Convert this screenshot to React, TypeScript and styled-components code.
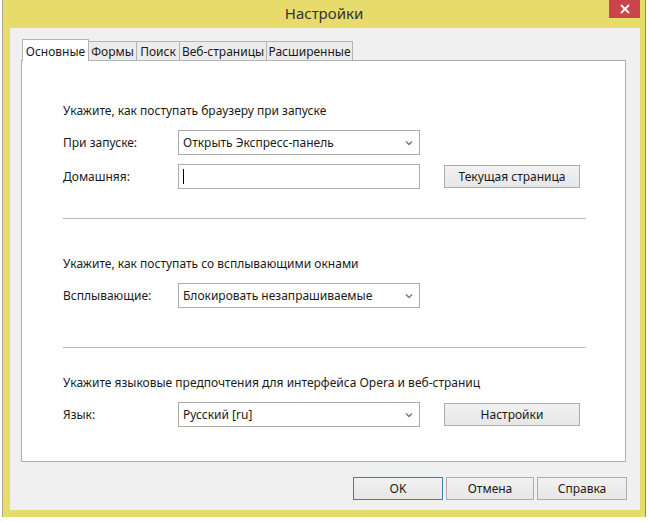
import styled, { createGlobalStyle } from "styled-components";

const GlobalStyle = createGlobalStyle`
  html, body {
    margin: 0;
    padding: 0;
    background: #ffffff;
  }
  body {
    font-family: "Noto Sans", "Open Sans", sans-serif;
    font-size: 12px;
    color: #1a1a1a;
  }
`;

const ChevronDown = () => (
  <svg width="8" height="6" viewBox="0 0 8 6">
    <path d="M1 1.5 L4 4.5 L7 1.5" fill="none" stroke="#7a7a7a" strokeWidth="1.5" />
  </svg>
);

const Window = styled.div`
  box-sizing: border-box;
  margin-left: 2px;
  width: 644px;
  height: 517px;
  display: flex;
  flex-direction: column;
  background: #e7dc6b;
  border-left: 1px solid #a8a68a;
  border-right: 1px solid #8c8a6a;
`;

const TitleBar = styled.div`
  height: 28px;
  display: grid;
  grid-template-columns: 1fr auto 1fr;
  align-items: start;
`;

const Title = styled.div`
  grid-column: 2;
  font-size: 15px;
  line-height: 26px;
  color: #333333;
`;

const CloseButton = styled.div`
  grid-column: 3;
  justify-self: end;
  margin-right: 5px;
  width: 31px;
  height: 18px;
  background: #c9454a;
  display: flex;
  align-items: center;
  justify-content: center;
`;

const Client = styled.div`
  flex: 1;
  margin: 0 5px 7px 7px;
  background: #f0f0f0;
  padding: 11px 14px 0 11px;
  display: flex;
  flex-direction: column;
`;

const TabRow = styled.div`
  display: flex;
  align-items: flex-end;
  height: 22px;
  margin-left: 1px;
  position: relative;
  z-index: 1;
  margin-bottom: -1px;
`;

const Tab = styled.div<{ $active?: boolean; $w: number }>`
  box-sizing: border-box;
  width: ${(p) => p.$w}px;
  height: ${(p) => (p.$active ? 22 : 20)}px;
  border: 1px solid #b4b4b4;
  border-bottom: ${(p) => (p.$active ? "none" : "1px solid #b4b4b4")};
  margin-left: ${(p) => (p.$active ? 0 : -1)}px;
  background: ${(p) => (p.$active ? "#ffffff" : "#ececec")};
  display: flex;
  align-items: center;
  justify-content: center;
  padding-top: ${(p) => (p.$active ? 1 : 0)}px;
  white-space: nowrap;
  &:first-child {
    margin-left: 0;
  }
`;

const Panel = styled.div`
  box-sizing: border-box;
  height: 402px;
  background: #ffffff;
  border: 1px solid #adadad;
  padding: 0 0 0 41px;
  display: flex;
  flex-direction: column;
`;

const Heading = styled.div<{ $top: number }>`
  margin-top: ${(p) => p.$top}px;
  line-height: 16px;
  margin-bottom: 11px;
  white-space: nowrap;
`;

const Row = styled.div<{ $gap?: number }>`
  display: flex;
  align-items: center;
  height: 25px;
  margin-top: ${(p) => p.$gap ?? 0}px;
`;

const Label = styled.div`
  width: 115px;
`;

const Select = styled.div`
  box-sizing: border-box;
  width: 242px;
  height: 25px;
  border: 1px solid #acacac;
  background: #ffffff;
  display: flex;
  align-items: center;
  justify-content: space-between;
  padding: 0 6px 0 4px;
`;

const TextInput = styled.div`
  box-sizing: border-box;
  width: 242px;
  height: 25px;
  border: 1px solid #abadb3;
  background: #ffffff;
  display: flex;
  align-items: center;
  padding-left: 4px;
`;

const Caret = styled.span`
  width: 1px;
  height: 15px;
  background: #000000;
`;

const Button = styled.div<{ $w: number; $default?: boolean }>`
  box-sizing: border-box;
  width: ${(p) => p.$w}px;
  height: 23px;
  border: 1px solid ${(p) => (p.$default ? "#3c7fb1" : "#acacac")};
  background: linear-gradient(#f2f2f2, #e6e6e6);
  display: flex;
  align-items: center;
  justify-content: center;
  color: #1a1a1a;
`;

const SideButton = styled(Button)`
  margin-left: 24px;
`;

const Separator = styled.div<{ $top: number }>`
  width: 523px;
  height: 1px;
  background: #b9b9b9;
  margin-top: ${(p) => p.$top}px;
`;

const Footer = styled.div`
  display: flex;
  justify-content: flex-end;
  gap: 3px;
  padding-top: 15px;
  margin-right: -1px;
`;

export default function App() {
  return (
    <>
      <GlobalStyle />
      <Window>
        <TitleBar>
          <Title>Настройки</Title>
          <CloseButton>
            <svg width="10" height="10" viewBox="0 0 10 10">
              <path d="M1 1 L9 9 M9 1 L1 9" stroke="#ffffff" strokeWidth="1.8" />
            </svg>
          </CloseButton>
        </TitleBar>
        <Client>
          <TabRow>
            <Tab $active $w={67}>Основные</Tab>
            <Tab $w={49}>Формы</Tab>
            <Tab $w={44}>Поиск</Tab>
            <Tab $w={88}>Веб-страницы</Tab>
            <Tab $w={87}>Расширенные</Tab>
          </TabRow>
          <Panel>
            <Heading $top={42}>Укажите, как поступать браузеру при запуске</Heading>
            <Row>
              <Label>При запуске:</Label>
              <Select>
                Открыть Экспресс-панель
                <ChevronDown />
              </Select>
            </Row>
            <Row $gap={9}>
              <Label>Домашняя:</Label>
              <TextInput>
                <Caret />
              </TextInput>
              <SideButton $w={136}>Текущая страница</SideButton>
            </Row>
            <Separator $top={29} />
            <Heading $top={37}>Укажите, как поступать со всплывающими окнами</Heading>
            <Row>
              <Label>Всплывающие:</Label>
              <Select>
                Блокировать незапрашиваемые
                <ChevronDown />
              </Select>
            </Row>
            <Separator $top={39} />
            <Heading $top={27}>Укажите языковые предпочтения для интерфейса Opera и веб-страниц</Heading>
            <Row>
              <Label>Язык:</Label>
              <Select>
                Русский [ru]
                <ChevronDown />
              </Select>
              <SideButton $w={136}>Настройки</SideButton>
            </Row>
          </Panel>
          <Footer>
            <Button $w={90} $default>OK</Button>
            <Button $w={88}>Отмена</Button>
            <Button $w={90}>Справка</Button>
          </Footer>
        </Client>
      </Window>
    </>
  );
}
